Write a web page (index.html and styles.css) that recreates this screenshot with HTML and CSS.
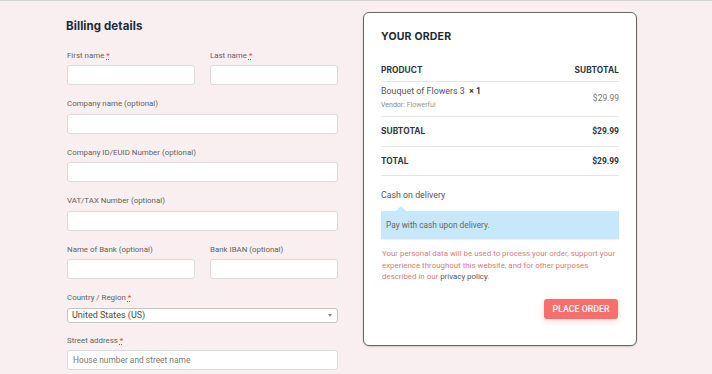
FILE: index.html
```html
<!DOCTYPE html>
<html lang="en">
<head>
<meta charset="utf-8">
<title>Checkout</title>
<link rel="stylesheet" href="styles.css">
</head>
<body>
<div class="page">
  <form class="billing">
    <h3 class="billing-title">Billing details</h3>
    <div class="row-2">
      <div class="field">
        <label class="label">First name <abbr class="req">*</abbr></label>
        <input class="input" type="text">
      </div>
      <div class="field">
        <label class="label">Last name <abbr class="req">*</abbr></label>
        <input class="input" type="text">
      </div>
    </div>
    <div class="field">
      <label class="label">Company name (optional)</label>
      <input class="input" type="text">
    </div>
    <div class="field">
      <label class="label">Company ID/EUID Number (optional)</label>
      <input class="input" type="text">
    </div>
    <div class="field">
      <label class="label">VAT/TAX Number (optional)</label>
      <input class="input" type="text">
    </div>
    <div class="row-2">
      <div class="field">
        <label class="label">Name of Bank (optional)</label>
        <input class="input" type="text">
      </div>
      <div class="field">
        <label class="label">Bank IBAN (optional)</label>
        <input class="input" type="text">
      </div>
    </div>
    <div class="field field-select">
      <label class="label">Country / Region <abbr class="req">*</abbr></label>
      <div class="select-wrap">
        <select class="select"><option>United States (US)</option></select>
      </div>
    </div>
    <div class="field">
      <label class="label">Street address <abbr class="req">*</abbr></label>
      <input class="input" type="text" placeholder="House number and street name">
    </div>
  </form>

  <aside class="order">
    <h3 class="order-title">YOUR ORDER</h3>
    <div class="order-row order-head">
      <span>PRODUCT</span><span>SUBTOTAL</span>
    </div>
    <div class="order-row order-item">
      <div class="item-info">
        <div class="item-name">Bouquet of Flowers 3&nbsp; <strong class="qty">× 1</strong></div>
        <div class="item-vendor"><span class="vendor-key">Vendor:</span> Flowerful</div>
      </div>
      <span class="item-price">$29.99</span>
    </div>
    <div class="order-row order-sum">
      <span>SUBTOTAL</span><span>$29.99</span>
    </div>
    <div class="order-row order-sum">
      <span>TOTAL</span><span>$29.99</span>
    </div>
    <div class="payment-name">Cash on delivery</div>
    <div class="payment-box">Pay with cash upon delivery.</div>
    <p class="privacy">Your personal data will be used to process your order, support your experience throughout this website, and for other purposes described in our <a class="privacy-link" href="#">privacy policy</a>.</p>
    <div class="actions">
      <button class="place-order" type="button">PLACE ORDER</button>
    </div>
  </aside>
</div>
</body>
</html>
```

FILE: styles.css
```css
* { box-sizing: border-box; }

html, body {
  margin: 0;
  padding: 0;
  background: #f9eff0;
}

body {
  border-top: 1px solid #d4d4d4;
  font-family: Roboto, "Liberation Sans", Arial, sans-serif;
  color: #555;
  height: 374px;
  overflow: hidden;
}

.page {
  display: flex;
  align-items: flex-start;
  gap: 25px;
  padding: 11px 0 0 67px;
}

/* Billing column */
.billing {
  width: 271px;
  flex: none;
  display: flex;
  flex-direction: column;
}

.billing-title {
  margin: 5.5px 0 16px -1px;
  font-family: Inter, "Open Sans", sans-serif;
  font-weight: 700;
  font-size: 11.5px;
  line-height: 16px;
  color: #1c2a38;
  letter-spacing: 0.1px;
}

.row-2 {
  display: grid;
  grid-template-columns: 1fr 1fr;
  gap: 15px;
}

.field {
  display: flex;
  flex-direction: column;
  margin-bottom: 13px;
}

.label {
  font-size: 7.9px;
  line-height: 12.5px;
  color: #626262;
  margin-bottom: 3px;
}

.req {
  color: #e2401c;
  text-decoration: underline dotted;
  border: none;
}

.input {
  display: block;
  height: 20px;
  width: 100%;
  border: 1px solid #dcdcdc;
  border-radius: 3px;
  background: #fff;
  padding: 0 5px;
  font-family: Roboto, "Liberation Sans", sans-serif;
  font-size: 8.4px;
  color: #333;
  outline: none;
}

.input::placeholder {
  color: #7a7a7a;
}

.field-select {
  margin-bottom: 12px;
}

.select-wrap {
  position: relative;
  line-height: 0;
}

.select-wrap::after {
  content: "";
  position: absolute;
  right: 6px;
  top: 6px;
  border-left: 2.5px solid transparent;
  border-right: 2.5px solid transparent;
  border-top: 3px solid #888;
}

.select {
  display: block;
  appearance: none;
  -webkit-appearance: none;
  width: 100%;
  height: 15px;
  border: 1px solid #c4c4c4;
  border-radius: 3px;
  background: #fff;
  padding: 0 4px;
  font-family: Roboto, "Liberation Sans", sans-serif;
  font-size: 9px;
  line-height: 13px;
  color: #4a4a4a;
}

/* Order card */
.order {
  width: 274px;
  flex: none;
  background: #fff;
  border: 1px solid #666;
  border-radius: 6px;
  padding: 17px 17px 26px 17px;
  box-shadow: 0 1px 2px rgba(0,0,0,0.15);
}

.order-title {
  margin: 0 0 20px;
  font-family: Inter, "Open Sans", sans-serif;
  font-weight: 700;
  font-size: 10.5px;
  line-height: 14px;
  color: #1c2a38;
  letter-spacing: 0.2px;
}

.order-row {
  display: flex;
  justify-content: space-between;
  align-items: center;
  border-bottom: 1px solid #e6e6e6;
}

.order-head {
  font-family: Inter, "Open Sans", sans-serif;
  font-weight: 700;
  font-size: 8.3px;
  line-height: 12px;
  color: #2a3642;
  letter-spacing: 0.1px;
  padding-bottom: 5px;
}

.order-item {
  padding: 4px 0 6px;
}

.item-name {
  font-size: 8.9px;
  line-height: 11px;
  color: #555;
}

.qty {
  font-weight: 700;
  color: #333;
  font-size: 8.5px;
}

.item-vendor {
  margin-top: 3px;
  font-size: 7px;
  line-height: 10px;
  color: #999;
}

.vendor-key {
  color: #888;
}

.item-price {
  font-size: 8.5px;
  color: #777;
  padding-bottom: 1px;
}

.order-sum {
  padding: 8px 0;
  line-height: 12.5px;
  font-size: 8.5px;
  font-weight: 700;
  color: #2a3642;
}

.order-sum span:first-child {
  font-family: Inter, "Open Sans", sans-serif;
  font-size: 8.3px;
  letter-spacing: 0.1px;
}

.payment-name {
  margin-top: 12.5px;
  font-size: 8.8px;
  line-height: 13px;
  color: #555;
}

.payment-box {
  position: relative;
  margin-top: 9.5px;
  background: #c6e8fa;
  padding: 8px 5px;
  font-size: 8.3px;
  line-height: 12px;
  color: #666;
  box-shadow: 0 1px 1px rgba(0,0,0,0.06);
}

.payment-box::before {
  content: "";
  position: absolute;
  left: 15px;
  top: -5px;
  border-left: 5px solid transparent;
  border-right: 5px solid transparent;
  border-bottom: 5px solid #c6e8fa;
}

.privacy {
  margin: 9.25px 0 0;
  padding-left: 1px;
  font-size: 7.9px;
  line-height: 11.5px;
  color: #e07a80;
}

.privacy-link {
  color: #4f5a63;
  text-decoration: none;
}

.actions {
  display: flex;
  justify-content: flex-end;
  margin-top: 16px;
  padding-right: 1px;
}

.place-order {
  width: 74px;
  height: 20px;
  border: none;
  border-radius: 3px;
  background: #f76e6c;
  color: #fff;
  font-family: Roboto, "Liberation Sans", sans-serif;
  font-size: 8.8px;
  font-weight: 500;
  padding: 0;
  box-shadow: 0 2px 6px rgba(247,110,108,0.3);
}
```
